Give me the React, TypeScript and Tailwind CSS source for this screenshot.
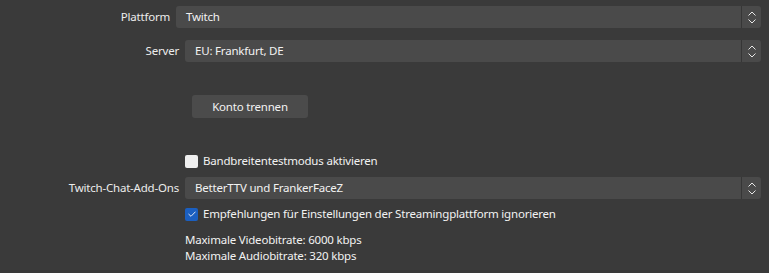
import React from "react";

function Spinner() {
  return (
    <div className="flex w-[20px] flex-col items-center justify-center gap-[3px] border-l border-[#363636]">
      <svg width="8" height="5" viewBox="0 0 8 5" fill="none" stroke="#e6e6e6" strokeWidth="1">
        <path d="M0.5 4.5 L4 1 L7.5 4.5" />
      </svg>
      <svg width="8" height="5" viewBox="0 0 8 5" fill="none" stroke="#e6e6e6" strokeWidth="1">
        <path d="M0.5 0.5 L4 4 L7.5 0.5" />
      </svg>
    </div>
  );
}

function Combo({ value }: { value: string }) {
  return (
    <div className="flex h-[22px] flex-1 rounded-[3px] bg-[#4a4a4a]">
      <div className="flex flex-1 items-center pl-[10px] text-[#f2f2f2]">{value}</div>
      <Spinner />
    </div>
  );
}

function Check({ checked, label }: { checked?: boolean; label: string }) {
  return (
    <div className="flex items-center gap-[5px]">
      {checked ? (
        <div className="flex h-[13px] w-[13px] items-center justify-center rounded-[2px] bg-[#1b5fc0]">
          <svg width="8" height="6" viewBox="0 0 8 6" fill="none" stroke="#dfe8f5" strokeWidth="1">
            <path d="M0.5 3 L3 5.3 L7.5 0.7" />
          </svg>
        </div>
      ) : (
        <div className="h-[13px] w-[13px] rounded-[2px] bg-[#efefef]" />
      )}
      <span className="text-[#f2f2f2]">{label}</span>
    </div>
  );
}

export default function App() {
  return (
    <div
      className="h-[273px] w-[769px] overflow-hidden bg-[#3a3a3a] pr-[8px] pt-[6px] text-[11.5px] leading-[16px] tracking-[-0.2px] text-[#ececec]"
      style={{ fontFamily: '"Noto Sans", "Open Sans", sans-serif' }}
    >
      {/* platform */}
      <div className="flex items-center gap-[6px]">
        <div className="w-[170px] text-right">Plattform</div>
        <Combo value="Twitch" />
      </div>

      {/* server */}
      <div className="mt-[12px] flex items-center gap-[6px]">
        <div className="w-[179px] text-right">Server</div>
        <Combo value="EU: Frankfurt, DE" />
      </div>

      <div className="mt-[33px] pl-[192px]">
        <button className="h-[23px] w-[116px] rounded-[3px] bg-[#4b4b4b] text-[#f2f2f2]">Konto trennen</button>
      </div>

      <div className="mt-[35px] pl-[185px]">
        <Check label="Bandbreitentestmodus aktivieren" />
      </div>

      <div className="mt-[8px] flex items-center gap-[6px]">
        <div className="w-[179px] text-right">Twitch-Chat-Add-Ons</div>
        <Combo value="BetterTTV und FrankerFaceZ" />
      </div>

      <div className="mt-[7px] pl-[185px]">
        <Check checked label="Empfehlungen für Einstellungen der Streamingplattform ignorieren" />
      </div>

      <div className="mt-[10px] pl-[185px] text-[#f2f2f2]">
        <div>Maximale Videobitrate: 6000 kbps</div>
        <div>Maximale Audiobitrate: 320 kbps</div>
      </div>
    </div>
  );
}
